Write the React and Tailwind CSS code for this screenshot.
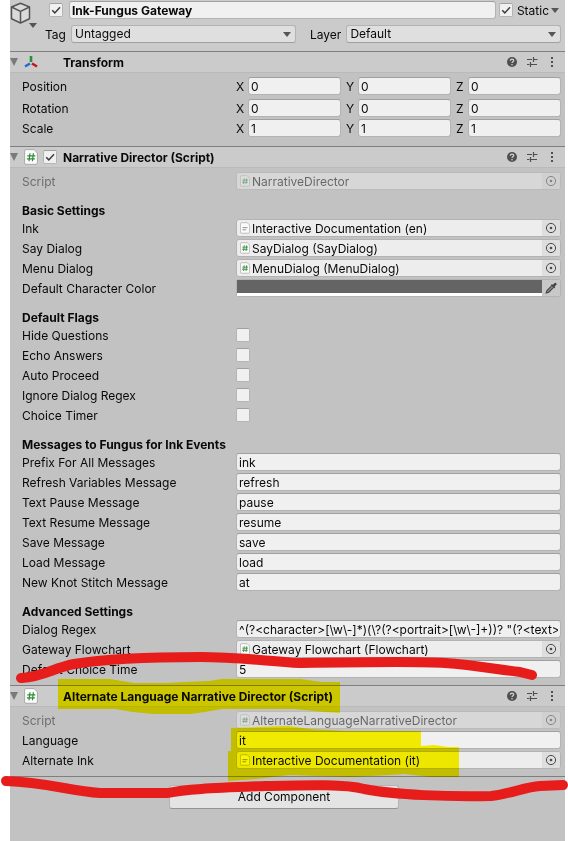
import React, { useId } from "react";

function Caret({ className = "" }) {
  return (
    <svg viewBox="0 0 8 5" className={`h-[5px] w-2 shrink-0 fill-[#555] ${className}`} aria-hidden="true">
      <path d="M0 0h8L4 5z" />
    </svg>
  );
}

function Check({ label, defaultChecked = false, id }) {
  return (
    <span className="relative block h-[14px] w-[14px] shrink-0">
      <input
        id={id}
        type="checkbox"
        aria-label={label}
        defaultChecked={defaultChecked}
        className="peer block h-[14px] w-[14px] appearance-none rounded-[2px] border border-[#b5b5b5] border-t-[#a0a0a0] bg-[#f0f0f0]"
      />
      <svg
        viewBox="0 0 14 14"
        className="pointer-events-none absolute inset-0 hidden h-[14px] w-[14px] peer-checked:block"
        fill="none"
        stroke="#3c3c3c"
        strokeWidth="1.5"
        aria-hidden="true"
      >
        <path d="M3.2 7.3 5.8 9.9 11 4.2" />
      </svg>
    </span>
  );
}

function Paper({ kind, large = false }) {
  return (
    <svg viewBox="0 0 14 16" className={large ? "h-4 w-[14px] shrink-0" : "h-3 w-[10px] shrink-0"} aria-hidden="true">
      <path d="M2 .6h8.2L13.4 4v9.900a1.400 1.400 0 0 1-1.400 1.400H2A1.400 1.400 0 0 1 .6 13.900V2A1.400 1.400 0 0 1 2 .6z" fill="#fbfbfb" stroke="#a9a9a9" />
      {kind === "cs" ? (
        <path d="M6 4.200 5 12.300M9.400 4.200l-1 8.100M3.300 6.800h8M2.900 9.800h8" stroke="#2f8a38" strokeWidth="1.200" fill="none" />
      ) : (
        <path d="M3.500 7.500h7M3.500 10.500h5" stroke="#8a8a8a" strokeWidth="1.300" fill="none" />
      )}
    </svg>
  );
}

const box = "h-[18px] rounded-[3px] border border-[#b3b3b3] border-t-[#a0a0a0] bg-[#f0f0f0]";

function TextField({ id, value }) {
  return (
    <input
      id={id}
      type="text"
      defaultValue={value}
      className={`${box} w-full min-w-0 flex-1 px-[2px] text-xs text-[#090909] outline-none`}
    />
  );
}

function ObjectField({ id, value, kind, disabled }) {
  return (
    <div
      className={`flex h-[18px] min-w-0 flex-1 items-center overflow-hidden rounded-[3px] border border-[#b3b3b3] bg-[#ededed] pl-[3px] ${disabled ? "opacity-50" : ""}`}
    >
      <Paper kind={kind} />
      <input
        id={id}
        type="text"
        readOnly
        disabled={disabled}
        defaultValue={value}
        className="h-4 min-w-0 flex-1 bg-transparent pt-px pl-[2px] text-xs leading-[15px] text-[#090909] outline-none"
      />
      <button type="button" disabled={disabled} aria-label="Select object" className="flex h-4 w-[18px] items-center justify-center bg-[#dedede]">
        <svg viewBox="0 0 12 12" className="h-3 w-3" fill="none" stroke="#4a4a4a" aria-hidden="true">
          <circle cx="6" cy="6" r="4.600" />
          <circle cx="6" cy="6" r="1.300" fill="#4a4a4a" stroke="none" />
        </svg>
      </button>
    </div>
  );
}

function Row({ label, type = "text", value, kind, disabled }) {
  const id = useId();
  return (
    <div className="flex h-5 items-start">
      <label htmlFor={id} className={`w-[214px] shrink-0 leading-5 ${disabled ? "text-[#6d6d6d]" : ""}`}>
        {label}
      </label>
      {type === "text" && <TextField id={id} value={value} />}
      {type === "object" && <ObjectField id={id} value={value} kind={kind} disabled={disabled} />}
      {type === "check" && (
        <div className="pt-[2px]">
          <Check id={id} />
        </div>
      )}
      {type === "color" && (
        <div className="flex h-[18px] flex-1 rounded-[3px] border border-[#b3b3b3]">
          <button id={id} type="button" className="flex h-4 flex-1 flex-col bg-white">
            <span className="block h-[13px] w-full bg-[#646464]" />
          </button>
          <button type="button" aria-label="Pick color" className="flex h-4 w-[18px] items-center justify-center bg-[#c8c8c8]">
            <svg viewBox="0 0 12 12" className="h-3 w-3" aria-hidden="true">
              <path d="M6.800 2.200 8 2.800 9.300 1.200a1.300 1.300 0 0 1 1.900 1.900L9.600 4.400l.6 1-1.200 1L5.700 3.300z" fill="#444" />
              <path d="M6.400 4.200 2 8.600 1.200 11l2.600-.8L8 5.800" fill="#8c8c8c" stroke="#444" strokeWidth="1.100" />
            </svg>
          </button>
        </div>
      )}
    </div>
  );
}

function Vector({ label, value, className = "" }) {
  const id = useId();
  return (
    <div role="group" aria-labelledby={id} className={`flex h-5 items-start ${className}`}>
      <span id={id} className="w-[214px] shrink-0 leading-5">{label}</span>
      <div className="grid flex-1 grid-cols-3 gap-[5px]">
        {["X", "Y", "Z"].map((axis) => (
          <label key={axis} className="flex min-w-0">
            <span className="w-3 shrink-0 leading-5">{axis}</span>
            <TextField value={value} />
          </label>
        ))}
      </div>
    </div>
  );
}

function Heading({ children }) {
  return <h3 className="h-[27px] pt-[11px] leading-4 font-bold">{children}</h3>;
}

function Component({ title, icon, toggle, bodyClass, children }) {
  return (
    <section className="border-t border-[#7f7f7f]">
      <header className="flex h-[21px] items-center border-b border-[#bababa] bg-[#cbcbcb] pr-[7px]">
        <button type="button" aria-label={`Fold ${title}`} className="w-[14px]">
          <svg viewBox="0 0 9 8" className="h-2 w-[9px] fill-[#7a7a7a]" aria-hidden="true">
            <path d="M0 0h8L4 8z" />
          </svg>
        </button>
        <span className="w-[19px]">{icon}</span>
        <span className="w-5">{toggle && <Check label={`Enable ${title}`} defaultChecked />}</span>
        <h2 className="flex-1 pt-[2px] font-bold">{title}</h2>
        <div className="flex items-center gap-2">
          <button type="button" aria-label="Help">
            <svg viewBox="0 0 12 12" className="h-3 w-3" aria-hidden="true">
              <circle cx="6" cy="6" r="5" fill="#4f4f4f" />
              <path d="M4.300 4.700C4.400 2.600 7.700 2.600 7.700 4.600 7.700 5.700 6 5.800 6 7.100" fill="none" stroke="#d5d5d5" strokeWidth="1.300" />
              <circle cx="6" cy="8.800" r=".8" fill="#d5d5d5" />
            </svg>
          </button>
          <button type="button" aria-label="Presets">
            <svg viewBox="0 0 12 12" className="h-3 w-3" fill="none" stroke="#4f4f4f" strokeWidth="1.200" aria-hidden="true">
              <path d="M1 3.500h5M7.500 3.500h4M7.500 1v5M1 8.500h2.500M4.500 8.500h6.500M4.500 6v5" />
            </svg>
          </button>
          <button type="button" aria-label="More">
            <svg viewBox="0 0 12 12" className="h-3 w-3 fill-[#4f4f4f]" aria-hidden="true">
              <rect x="5" y="1" width="2" height="2" />
              <rect x="5" y="5" width="2" height="2" />
              <rect x="5" y="9" width="2" height="2" />
            </svg>
          </button>
        </div>
      </header>
      <div className={`pr-1 pl-3 ${bodyClass}`}>{children}</div>
    </section>
  );
}

function Dropdown({ label, value, className }) {
  return (
    <label className={`flex min-w-0 items-center ${className}`}>
      <span className="pt-[2px] pr-[5px]">{label}</span>
      <span className="relative min-w-0 flex-1">
        <select className="block h-[18px] w-full appearance-none rounded-[3px] border border-[#b3b3b3] border-b-[#a0a0a0] bg-[#dfdfdf] px-[3px] text-xs text-[#090909]">
          <option>{value}</option>
        </select>
        <Caret className="pointer-events-none absolute top-[7px] right-[5px]" />
      </span>
    </label>
  );
}

function Annotations() {
  return (
    <>
      <svg viewBox="0 0 568 841" className="pointer-events-none absolute top-0 left-0 h-[841px] w-[568px] mix-blend-multiply" aria-hidden="true">
        <g fill="#fff900">
          <path d="M58 679H110L134 683H165L185 682L209 681L222 679H300L322 682H340V713L325 712L294 709H222L205 712L190 714H153L133 712L115 709H58z" />
          <path d="M231 728L260 727L288 726L310 729L345 731H421V746L434 745L448 747H459V777L430 777L405 774L390 775L350 777L318 776L290 775L256 779L228 781V751H231z" />
        </g>
      </svg>
      <svg
        viewBox="0 0 568 841"
        className="pointer-events-none absolute top-0 left-0 h-[841px] w-[568px]"
        fill="none"
        stroke="#e71d1c"
        strokeWidth="10"
        strokeLinecap="round"
        strokeLinejoin="round"
        aria-hidden="true"
      >
        <path d="M21 678C43 677 53 668 74 664C110 658 155 657 200 657C240 657 265 661 300 663C360 662 420 661 445 663C475 665 500 670 520 672L532 675" />
        <path d="M6 781C45 782 70 791 100 793H168C185 789 215 788 265 786C310 785 345 784 364 789C395 795 450 797 491 796C510 794 525 787 540 786L563 785" />
      </svg>
    </>
  );
}

export default function App() {
  return (
    <div className="relative min-h-screen bg-white pr-[3px] pl-[10px] font-['Inter','Liberation_Sans',sans-serif] text-xs text-[#090909]">
      <main className="flex min-h-screen flex-col bg-[#c2c2c2]">
        <header className="flex h-[51px] bg-[#cbcbcb] pt-px pr-1">
          <div className="flex w-[31px] shrink-0 pt-px">
            <svg viewBox="0 0 21 22" className="h-[22px] w-[21px] shrink-0" fill="#dadada" stroke="#555" strokeWidth="1.500" strokeLinejoin="round" aria-hidden="true">
              <path d="M10.500 1.300 19.500 5v11.800l-9 4.200-9-4.200V5z" />
              <path d="M1.500 5l9 4.400 9-4.400M10.500 9.400V21" fill="none" />
            </svg>
            <Caret className="-ml-[2px] mt-[21px]" />
          </div>
          <div className="flex min-w-0 flex-1 flex-col gap-[6px]">
            <div className="flex items-center">
              <span className="flex w-7 pl-2">
                <Check label="Active" defaultChecked />
              </span>
              <input aria-label="Name" type="text" defaultValue="Ink-Fungus Gateway" className={`${box} min-w-0 flex-1 px-[2px] text-xs font-bold outline-none`} />
              <label className="flex items-center pl-[3px]">
                <Check defaultChecked />
                <span className="pt-[2px] pl-1">Static</span>
              </label>
              <Caret className="mr-[2px] ml-[2px]" />
            </div>
            <div className="flex gap-[14px] pl-1">
              <Dropdown label="Tag" value="Untagged" className="flex-1" />
              <Dropdown label="Layer" value="Default" className="flex-1" />
            </div>
          </div>
        </header>

        <Component
          title="Transform"
          bodyClass="pt-1 pb-[7px]"
          icon={
            <svg viewBox="0 0 14 14" className="h-[14px] w-[14px]" fill="none" strokeWidth="2.600" aria-hidden="true">
              <path d="M7 1v6" stroke="#2b8e3a" />
              <path d="M6 8.500 1 11.500" stroke="#1f6fd0" />
              <path d="M8 8.500 13 11.500" stroke="#c4161c" />
            </svg>
          }
        >
          <Vector label="Position" value="0" className="mb-[2px]" />
          <Vector label="Rotation" value="0" />
          <Vector label="Scale" value="1" />
        </Component>

        <Component title="Narrative Director (Script)" toggle icon={<Paper kind="cs" large />} bodyClass="pt-1 pb-[5px]">
          <Row label="Script" type="object" kind="cs" value="NarrativeDirector" disabled />
          <Heading>Basic Settings</Heading>
          <Row label="Ink" type="object" kind="text" value="Interactive Documentation (en)" />
          <Row label="Say Dialog" type="object" kind="cs" value="SayDialog (SayDialog)" />
          <Row label="Menu Dialog" type="object" kind="cs" value="MenuDialog (MenuDialog)" />
          <Row label="Default Character Color" type="color" />
          <Heading>Default Flags</Heading>
          <Row label="Hide Questions" type="check" />
          <Row label="Echo Answers" type="check" />
          <Row label="Auto Proceed" type="check" />
          <Row label="Ignore Dialog Regex" type="check" />
          <Row label="Choice Timer" type="check" />
          <Heading>Messages to Fungus for Ink Events</Heading>
          <Row label="Prefix For All Messages" value="ink" />
          <Row label="Refresh Variables Message" value="refresh" />
          <Row label="Text Pause Message" value="pause" />
          <Row label="Text Resume Message" value="resume" />
          <Row label="Save Message" value="save" />
          <Row label="Load Message" value="load" />
          <Row label="New Knot Stitch Message" value="at" />
          <Heading>Advanced Settings</Heading>
          <Row label="Dialog Regex" value={'^(?<character>[\\w\\-]*)(\\?(?<portrait>[\\w\\-]+))? "(?<text>(.*))"'} />
          <Row label="Gateway Flowchart" type="object" kind="cs" value="Gateway Flowchart (Flowchart)" />
          <Row label="Default Choice Time" value="5" />
        </Component>

        <Component title="Alternate Language Narrative Director (Script)" icon={<Paper kind="cs" large />} bodyClass="pt-1 pb-[5px]">
          <Row label="Script" type="object" kind="cs" value="AlternateLanguageNarrativeDirector" disabled />
          <Row label="Language" value="it" />
          <Row label="Alternate Ink" type="object" kind="text" value="Interactive Documentation (it)" />
        </Component>

        <div className="flex justify-center border-t border-[#7f7f7f] pt-2 pr-[7px]">
          <button type="button" className="h-6 w-[230px] rounded-[3px] border border-[#b3b3b3] border-b-[#939393] bg-[#e4e4e4]">
            Add Component
          </button>
        </div>
      </main>
      <Annotations />
    </div>
  );
}
